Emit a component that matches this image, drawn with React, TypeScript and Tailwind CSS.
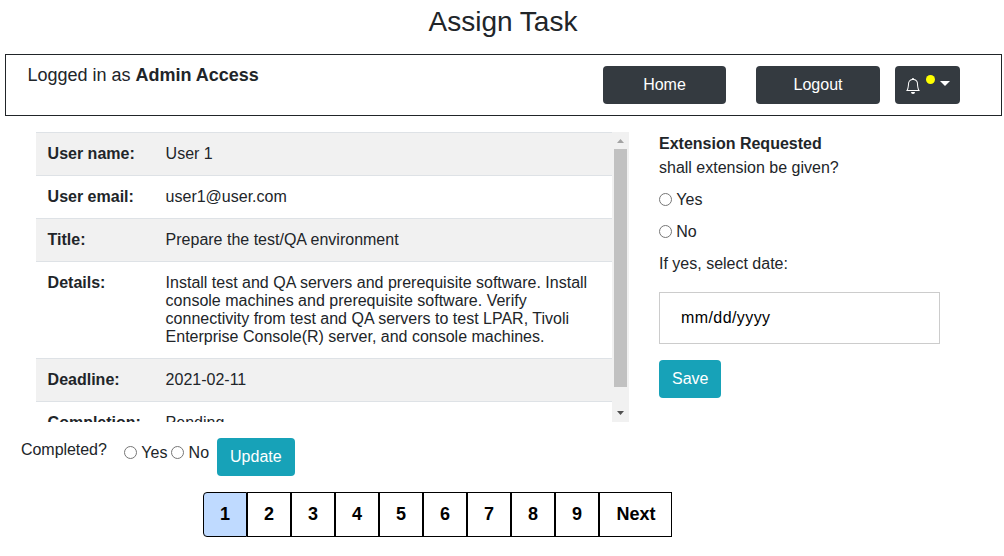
import type { ReactNode } from "react";

const rows: [string, string][] = [
  ["User name:", "User 1"],
  ["User email:", "user1@user.com"],
  ["Title:", "Prepare the test/QA environment"],
  [
    "Details:",
    "Install test and QA servers and prerequisite software. Install console machines and prerequisite software. Verify connectivity from test and QA servers to test LPAR, Tivoli Enterprise Console(R) server, and console machines.",
  ],
  ["Deadline:", "2021-02-11"],
  ["Completion:", "Pending"],
];

const pages = ["1", "2", "3", "4", "5", "6", "7", "8", "9"];

function Radio({ name, label }: { name: string; label: string }) {
  return (
    <label className="flex items-center">
      <input
        type="radio"
        name={name}
        className="mr-[4.3px] mb-[2px] size-[13px] appearance-none rounded-full border border-[#767676] bg-white checked:border-4 checked:border-[#0075ff]"
      />
      {label}
    </label>
  );
}

function InfoButton({ children }: { children: ReactNode }) {
  return (
    <button className="h-[38px] rounded bg-[#17a2b8] px-[13px] leading-6 text-white">
      {children}
    </button>
  );
}

function BellIcon() {
  return (
    <svg className="size-4" viewBox="0 0 16 16" fill="currentColor">
      <path d="M8 16a2 2 0 0 0 2-2H6a2 2 0 0 0 2 2z" />
      <path
        fillRule="evenodd"
        d="M8 1.918l-.797.161A4.002 4.002 0 0 0 4 6c0 .628-.134 2.197-.459 3.742-.16.767-.376 1.566-.663 2.258h10.244c-.287-.692-.502-1.49-.663-2.258C12.134 8.197 12 6.628 12 6a4.002 4.002 0 0 0-3.203-3.92L8 1.917zM14.22 12c.223.447.481.801.78 1H1c.299-.199.557-.553.78-1C2.68 10.2 3 6.88 3 6c0-2.42 1.72-4.44 4.005-4.901a1 1 0 1 1 1.99 0A5.002 5.002 0 0 1 13 6c0 .88.32 4.2 1.22 6z"
      />
    </svg>
  );
}

function TaskDetails() {
  return (
    <section className="flex h-[290px] w-[593px] overflow-hidden">
      <dl className="min-w-0 flex-1 leading-[18px]">
        {rows.map(([label, value]) => (
          <div
            key={label}
            className="flex border-t border-[#dee2e6] py-3 pl-[11.6px] odd:bg-[#f1f1f1]"
          >
            <dt className="w-[118px] shrink-0 font-bold">{label}</dt>
            <dd className="w-[434px]">{value}</dd>
          </div>
        ))}
      </dl>
      <div className="flex w-[17px] flex-col items-center bg-[#f1f1f1]">
        <svg className="h-[17px] w-[17px] shrink-0" viewBox="0 0 17 17">
          <path d="M5 11h7L8.5 7z" fill="#a3a3a3" />
        </svg>
        <div className="h-[238px] w-[13px] bg-[#c1c1c1]" />
        <svg className="mt-auto h-[17px] w-[17px] shrink-0" viewBox="0 0 17 17">
          <path d="M5 6h7L8.5 10z" fill="#505050" />
        </svg>
      </div>
    </section>
  );
}

export default function App() {
  return (
    <main className="h-[556px] w-[1004px] overflow-hidden bg-white font-['Liberation_Sans',Arial,sans-serif] text-base text-[#212529]">
      <h1 className="h-[54px] pt-[5px] pl-0.5 text-center text-[28px] leading-[34px]">
        Assign Task
      </h1>

      <header className="ml-[5px] flex h-[62px] w-[997px] items-start border border-[#212529] pt-[11px] pl-[21px]">
        <p className="-mt-[4px] w-[576px] pl-[0.4px] text-[18px] leading-[27px]">
          Logged in as <b>Admin Access</b>
        </p>
        <button className="mr-[30px] h-[38px] w-[123px] rounded bg-[#343a40] text-white">
          Home
        </button>
        <button className="mr-[15px] h-[38px] w-[124px] rounded bg-[#343a40] text-white">
          Logout
        </button>
        <button className="flex h-[38px] w-[65px] items-start rounded bg-[#343a40] pt-[12px] pl-[10px] text-white">
          <BellIcon />
          <span className="-mt-[3px] ml-[5px] size-[9px] rounded-full bg-[#ffff00]" />
          <svg className="mt-[3px] ml-[5px] h-[5px] w-[10px]" viewBox="0 0 10 5">
            <path d="M0 0h10L5 5z" fill="currentColor" />
          </svg>
        </button>
      </header>

      <div className="mt-4 ml-9 flex h-[290px]">
        <TaskDetails />
        <form className="ml-[30px] flex w-[281px] flex-col items-start leading-6">
          <b>Extension Requested</b>
          <p>shall extension be given?</p>
          <div className="mt-2 flex flex-col gap-2">
            <Radio name="extension" label="Yes" />
            <Radio name="extension" label="No" />
          </div>
          <p className="mt-2">If yes, select date:</p>
          <div className="mt-[16px] flex h-[52px] w-full items-center border border-[#cccccc] pl-[21px] text-black">
            <span className="tracking-[0.42px]">mm/dd/yyyy</span>
          </div>
          <div className="mt-4">
            <InfoButton>Save</InfoButton>
          </div>
        </form>
      </div>

      <div className="mt-4 ml-[21px] flex h-[38px] items-start leading-6">
        <span className="w-[103px] tracking-[-0.05px]">Completed?</span>
        <div className="mt-[3px] mr-2 flex gap-[3.9px]">
          <Radio name="completed" label="Yes" />
          <Radio name="completed" label="No" />
        </div>
        <InfoButton>Update</InfoButton>
      </div>

      <nav className="mt-4 ml-[203px] flex h-[45px] text-[18px] font-bold text-black">
        {pages.map((page) => (
          <button
            key={page}
            className="w-[44px] border border-black first:rounded-l first:bg-[#bfdaff]"
          >
            {page}
          </button>
        ))}
        <button className="w-[73px] border border-black pl-px">Next</button>
      </nav>
    </main>
  );
}
